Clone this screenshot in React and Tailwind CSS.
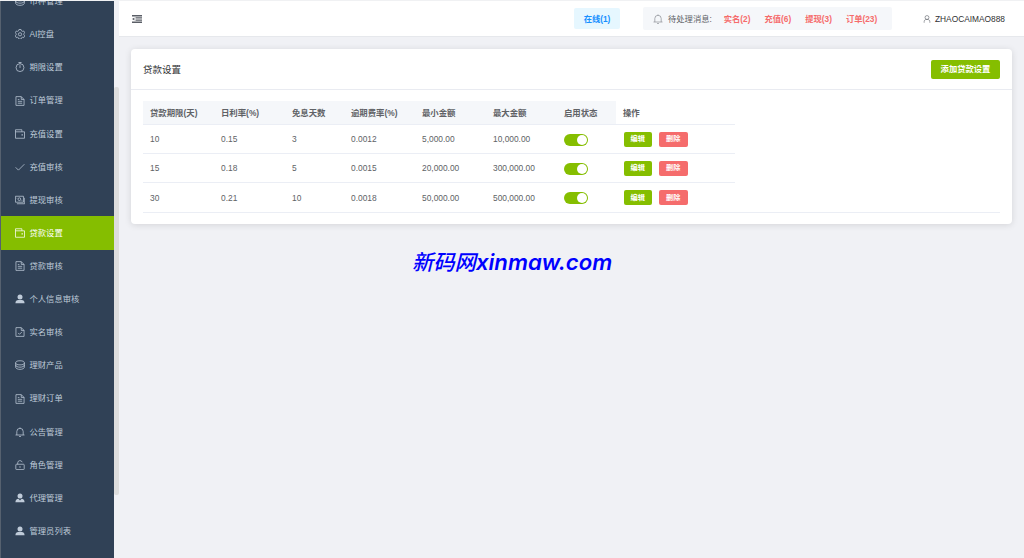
import React from 'react';

const shapes = {
  coin: <><ellipse cx="8" cy="4.500" rx="7" ry="3.300" /><path d="M1 4.500v7c0 1.900 3 3.500 7 3.500s7-1.600 7-3.500v-7M1 8c0 1.900 3 3.500 7 3.500S15 9.900 15 8" /></>,
  gear: <><path d="M6.300.8h3.400l.6 2 1.500.9 2.100-.5 1.700 2.900-1.500 1.600v1.600l1.500 1.600-1.700 2.900-2.100-.5-1.500.9-.6 2H6.300l-.6-2-1.500-.9-2.100.5L.4 10.900l1.500-1.600V7.700L.4 6.100l1.700-2.900 2.100.5 1.500-.9z" /><circle cx="8" cy="8.500" r="2.600" /></>,
  timer: <><circle cx="8" cy="9" r="6.300" /><path d="M8 9.500V5M5.500.8h5M8 .8v2" /></>,
  doc: <path d="M1.500 1h8.500l4.500 4.500V15h-13zM10 1v4.500h4.500M4.500 5.500H7M4.500 8.500h7M4.500 11.500h7" />,
  wallet: <><path d="M11 4.500V1.200H.8v13.600h14.400V4.500H.8" /><path d="M10.500 9.500h2" strokeWidth="2" /></>,
  check: <path d="M1 8.500l4.500 4.500L15 3.500" />,
  money: <><path d="M.7 2h12.800v9.500H.7zM3 14h12.500V4.500" /><circle cx="7" cy="6.700" r="2.200" /><path d="M3 4.500v1M11 8v1" /></>,
  user: <g fill="currentColor" stroke="none"><circle cx="8" cy="4.800" r="4" /><path d="M.7 14.700c0-3.700 2-5 4.500-5h5.600c2.500 0 4.500 1.300 4.500 5z" /></g>,
  agent: <g fill="currentColor" stroke="none"><circle cx="8" cy="4.600" r="4" /><path d="M.7 14.700c0-3.700 1.800-5 4.800-5.500L8 12l2.500-2.800c3 .5 4.800 1.800 4.800 5.500z" /></g>,
  docCheck: <path d="M1.500 1h8.500l4.500 4.500V15h-13zM10 1v4.500h4.500M5 9.500l2.200 2.200L11.200 7.700" />,
  bell: <path d="M.8 12.800h14.400M2.900 12.800V7.200a5.100 5.100 0 0 1 10.200 0v5.600M8 2.100V.7M6.500 15.200h3" />,
  lock: <><rect x="1.300" y="6.800" width="13.400" height="8.500" rx="1" /><path d="M4.300 6.800V4.500a3.700 3.700 0 0 1 7.200-1M8 9.800v2.700" /></>,
  person: <><circle cx="8" cy="5" r="3.900" /><path d="M2.300 15.500V13.500c0-2.700 1.600-4.500 4.200-4.500h3c2.600 0 4.200 1.800 4.200 4.500v2" /></>,
};

function Icon({ name, className }) {
  return (
    <svg viewBox="0 0 16 16" fill="none" stroke="currentColor" strokeWidth="1.2" className={className}>
      {shapes[name]}
    </svg>
  );
}

const menu = [
  ['coin', '币种管理'],
  ['gear', 'AI控盘'],
  ['timer', '期限设置'],
  ['doc', '订单管理'],
  ['wallet', '充值设置'],
  ['check', '充值审核'],
  ['money', '提现审核'],
  ['wallet', '贷款设置'],
  ['doc', '贷款审核'],
  ['user', '个人信息审核'],
  ['docCheck', '实名审核'],
  ['coin', '理财产品'],
  ['doc', '理财订单'],
  ['bell', '公告管理'],
  ['lock', '角色管理'],
  ['agent', '代理管理'],
  ['user', '管理员列表'],
];

const heads = ['贷款期限(天)', '日利率(%)', '免息天数', '逾期费率(%)', '最小金额', '最大金额', '启用状态'];
const rows = [
  ['10', '0.15', '3', '0.0012', '5,000.00', '10,000.00'],
  ['15', '0.18', '5', '0.0015', '20,000.00', '300,000.00'],
  ['30', '0.21', '10', '0.0018', '50,000.00', '500,000.00'],
];
const notices = ['实名(2)', '充值(6)', '提现(3)', '订单(23)'];
const columns = 'grid grid-cols-[71px_71px_59px_71px_71px_71px_59px_119px] w-[592px]';

function Sidebar() {
  return (
    <aside className="flex w-[119px] shrink-0 bg-[#f0f1f5]">
      <nav className="flex w-[114px] flex-col overflow-hidden border-l border-[#56616f] bg-[#304156]">
        <div className="-mt-[16.300px] flex flex-col">
          {menu.map(([icon, label], i) => (
            <div
              key={label}
              className={
                'flex h-[33.120px] shrink-0 items-center gap-[5px] pl-[13.500px] text-[8.3px] ' +
                (i === 7 ? 'bg-[#85be00] text-white' : 'text-[#bfcbd9]')
              }
            >
              <Icon name={icon} className="size-[10px] shrink-0" />
              <span className="whitespace-nowrap">{label}</span>
            </div>
          ))}
        </div>
      </nav>
      <div className="mt-[86px] h-[408px] w-[5px] rounded-[2px] bg-[#dddddd]" />
    </aside>
  );
}

function Header() {
  return (
    <header className="flex h-[36px] shrink-0 items-center border-b border-[#e6e8ec] bg-white pl-[13px] pr-[19px]">
      <svg viewBox="0 0 10 8" className="h-2 w-[10px] text-[#5a5e66]" fill="currentColor">
        <path d="M0 0h10v1.500H0zM3.500 2.300H10v1.200H3.500zM3.500 4.500H10v1.200H3.500zM0 6.500h10V8H0zM0 4l2.400-1.600v3.200z" />
      </svg>
      <div className="ml-auto flex h-[21px] w-[46px] items-center justify-center rounded-[2px] bg-[#e6f7ff] pt-px text-[8.3px] font-bold text-[#1890ff]">
        在线(1)
      </div>
      <div className="ml-[23px] flex h-[23px] w-[249px] items-center rounded-[2px] bg-[#f5f7fa] pl-[10px] text-[8.3px]">
        <Icon name="bell" className="size-[10px] text-[#909399]" />
        <span className="ml-[5px] w-[55.700px] pt-px text-[#606266]">待处理消息:</span>
        <div className="flex gap-[14px] pt-px font-bold text-[#f56c6c]">
          {notices.map((n) => <span key={n}>{n}</span>)}
        </div>
      </div>
      <div className="ml-[31px] flex w-[82px] items-center gap-1 text-[8.35px] text-[#303133]">
        <Icon name="person" className="size-2 shrink-0 text-[#5a5e66]" />
        <span className="pt-px">ZHAOCAIMAO888</span>
      </div>
    </header>
  );
}

function LoanTable() {
  return (
    <div className="mx-3 mt-[11px] border-b border-[#ebeef5] text-[8.4px] text-[#606266]">
      <div className={columns + ' h-6 border-b border-[#ebeef5] font-bold'}>
        {heads.map((h) => (
          <div key={h} className="flex items-center whitespace-nowrap bg-[#f5f7fa] pl-[7px] pt-[2px]">{h}</div>
        ))}
        <div className="flex items-center pl-[7px] pt-[2px]">操作</div>
      </div>
      {rows.map((row, i) => (
        <div key={row[0]} className={columns + ' h-[29px] ' + (i < 2 ? 'border-b border-[#ebeef5]' : '')}>
          {row.map((cell, j) => (
            <div key={j} className="flex items-center pl-[7px] pt-px">{cell}</div>
          ))}
          <div className="flex items-center pl-[7px] pt-px">
            <div className="flex h-3 w-6 items-center justify-end rounded-full bg-[#85be00] pr-px">
              <div className="size-[10px] rounded-full bg-white" />
            </div>
          </div>
          <div className="flex items-center gap-[7px] pl-[7.500px] text-[7.2px] font-bold text-white">
            <button className="flex h-[15px] w-[28.500px] items-center justify-center rounded-[2px] bg-[#85be00]">编辑</button>
            <button className="flex h-[15px] w-[28.500px] items-center justify-center rounded-[2px] bg-[#f56c6c]">删除</button>
          </div>
        </div>
      ))}
    </div>
  );
}

export default function App() {
  return (
    <div className="flex h-[558px] w-[1024px] overflow-hidden border-t border-[#f0f1f3] bg-[#f0f1f5] font-['Liberation_Sans','Noto_Sans_CJK_SC',sans-serif] leading-none">
      <Sidebar />
      <div className="flex min-w-0 flex-1 flex-col">
        <Header />
        <main className="pl-3 pr-3 pt-3">
          <section className="h-[175px] rounded-[4px] bg-white shadow-[0_1px_7px_rgba(0,0,0,0.12)]">
            <div className="flex h-[41px] items-center justify-between border-b border-[#e9ebf1] px-3">
              <h1 className="pt-px text-[9.5px] text-[#303133]">贷款设置</h1>
              <button className="flex h-[19px] w-[69px] items-center justify-center rounded-[2px] bg-[#85be00] text-[8.3px] font-bold text-white">
                添加贷款设置
              </button>
            </div>
            <LoanTable />
          </section>
          <div className="ml-[281px] mt-[26px] flex items-start whitespace-nowrap italic text-[#0000ff]">
            <span className="text-[21.300px] font-medium font-['Noto_Sans_CJK_SC',sans-serif]">新码网</span>
            <span className="pt-px text-[22.200px] font-semibold font-['Inter',sans-serif]">xinmaw.com</span>
          </div>
        </main>
      </div>
    </div>
  );
}
